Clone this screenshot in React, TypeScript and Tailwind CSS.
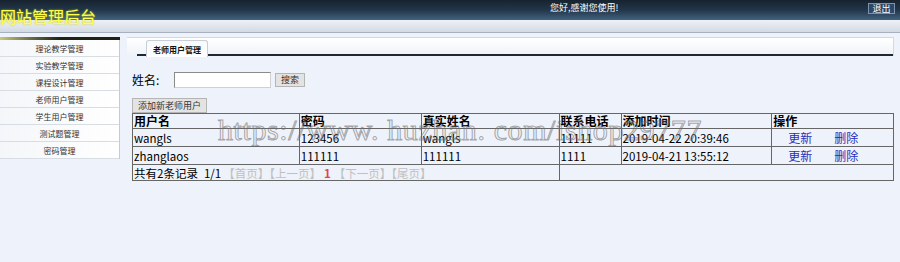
const menus = ['理论教学管理', '实验教学管理', '课程设计管理', '老师用户管理', '学生用户管理', '测试题管理', '密码管理']

const rows = [
    { name: 'wangls', pwd: '123456', real: 'wangls', tel: '11111', time: '2019-04-22 20:39:46' },
    { name: 'zhanglaos', pwd: '111111', real: '111111', tel: '1111', time: '2019-04-21 13:55:12' },
]

export default function App() {
    return (
        <div className="relative w-[900px] h-[262px] overflow-hidden bg-[#eef2fa] font-['Noto_Sans_CJK_SC','Liberation_Sans',sans-serif] text-black">
            {/* 顶部 */}
            <div className="relative h-[20px] bg-gradient-to-b from-[#17232f] via-[#22364a] to-[#43627f]">
                <div className="absolute left-[550px] top-[3px] text-[9px] leading-[10px] text-white">
                    您好,感谢您使用!
                </div>
                <button className="absolute right-[5px] top-[3px] h-[11px] w-[27px] border border-[#7d93ad] bg-[#2c4868] text-[9px] leading-[9px] text-white">
                    退出
                </button>
            </div>
            <div className="absolute left-0 top-[7px] text-[16px] leading-[18px] text-[#ffff4d] [text-shadow:0_0_2px_#c8c800]">
                网站管理后台
            </div>
            <div className="h-[13px] bg-gradient-to-b from-[#eef1f6] to-[#d3dae4] border-b border-[#a7b0bd]" />

            <div className="flex mt-[3px]">
                {/* 左侧菜单 */}
                <div className="w-[120px] mt-[1px]">
                    <div className="h-[3px] bg-gradient-to-r from-[#c9c97a] via-[#1e2214] to-[#1e2214]" />
                    <div className="border-r border-[#c5cbd4] bg-gradient-to-r from-[#f4f6f9] to-[#ffffff]">
                        {menus.map((m) => (
                            <div key={m} className="h-[17px] border-b border-[#d8dde4] text-center text-[8px] leading-[17px] text-[#333]">
                                {m}
                            </div>
                        ))}
                    </div>
                </div>

                {/* 右侧内容 */}
                <div className="ml-[7px] w-[767px]">
                    <div className="relative h-[19px] mt-[1px] border-t border-r border-[#d3d9e1] bg-gradient-to-b from-[#ffffff] to-[#eef3f8]">
                        <div className="absolute left-[10px] right-0 bottom-0 h-[2px] bg-[#1c2a35]" />
                        <div className="absolute left-[19px] top-[2px] h-[17px] w-[62px] rounded-t-[3px] border border-b-0 border-[#c7ced8] bg-gradient-to-b from-[#f8f9fb] to-[#ffffff] text-center text-[8px] font-bold leading-[17px] text-[#111]">
                            老师用户管理
                        </div>
                    </div>

                    <div className="pl-[5px] pt-[16px]">
                        <div className="flex items-center h-[16px]">
                            <span className="w-[42px] text-[12px] leading-[16px]">姓名:</span>
                            <input className="h-[16px] w-[97px] border border-[#8a8a8a] border-r-[#d0d0d0] border-b-[#d0d0d0] bg-white" />
                            <button className="ml-[4px] h-[14px] w-[30px] border border-[#b5b5b5] bg-[#e3e3e3] text-[9px] leading-[12px] text-[#333]">
                                搜索
                            </button>
                        </div>
                        <button className="mt-[10px] block h-[15px] w-[75px] border border-[#b5b5b5] bg-[#e3e3e3] text-[9px] leading-[13px] text-[#333]">
                            添加新老师用户
                        </button>

                        <table className="w-[762px] border-collapse border border-[#555] text-[11.5px] leading-[14px]">
                            <colgroup>
                                <col className="w-[167px]" />
                                <col className="w-[122px]" />
                                <col className="w-[138px]" />
                                <col className="w-[62px]" />
                                <col className="w-[151px]" />
                                <col className="w-[122px]" />
                            </colgroup>
                            <thead>
                                <tr className="h-[15px]">
                                    {['用户名', '密码', '真实姓名', '联系电话', '添加时间', '操作'].map((h) => (
                                        <th key={h} className="border border-[#666] px-[1px] py-0 text-left text-[12px] font-bold">
                                            {h}
                                        </th>
                                    ))}
                                </tr>
                            </thead>
                            <tbody>
                                {rows.map((r) => (
                                    <tr key={r.name} className="h-[18px]">
                                        <td className="border border-[#666] px-[1px]">{r.name}</td>
                                        <td className="border border-[#666] px-[1px]">{r.pwd}</td>
                                        <td className="border border-[#666] px-[1px]">{r.real}</td>
                                        <td className="border border-[#666] px-[1px]">{r.tel}</td>
                                        <td className="border border-[#666] px-[1px]">{r.time}</td>
                                        <td className="border border-[#666] pl-[16px] text-[12px] text-[#2b2bb8]">
                                            <span>更新</span>
                                            <span className="ml-[22px]">删除</span>
                                        </td>
                                    </tr>
                                ))}
                                <tr className="h-[16px]">
                                    <td colSpan={3} className="border border-[#666] px-[1px] whitespace-nowrap">
                                        <span>共有2条记录</span>
                                        <span className="ml-[6px]">1/1</span>
                                        <span className="ml-[2px] text-[#c0c0c0]">【首页】【上一页】</span>
                                        <span className="mx-[3px] font-bold text-[#e04545]">1</span>
                                        <span className="text-[#c0c0c0]">【下一页】【尾页】</span>
                                    </td>
                                    <td colSpan={3} className="border border-[#666]" />
                                </tr>
                            </tbody>
                        </table>
                    </div>
                </div>
            </div>

            {/* 水印 */}
            <div className="pointer-events-none absolute left-[218px] top-[114px] whitespace-nowrap font-['Liberation_Serif',serif] text-[30px] leading-[32px] tracking-[0.6px] text-transparent [-webkit-text-stroke:1px_rgba(110,110,110,0.6)]">
                https://www. huzhan. com/ishop29777
            </div>
        </div>
    )
}
